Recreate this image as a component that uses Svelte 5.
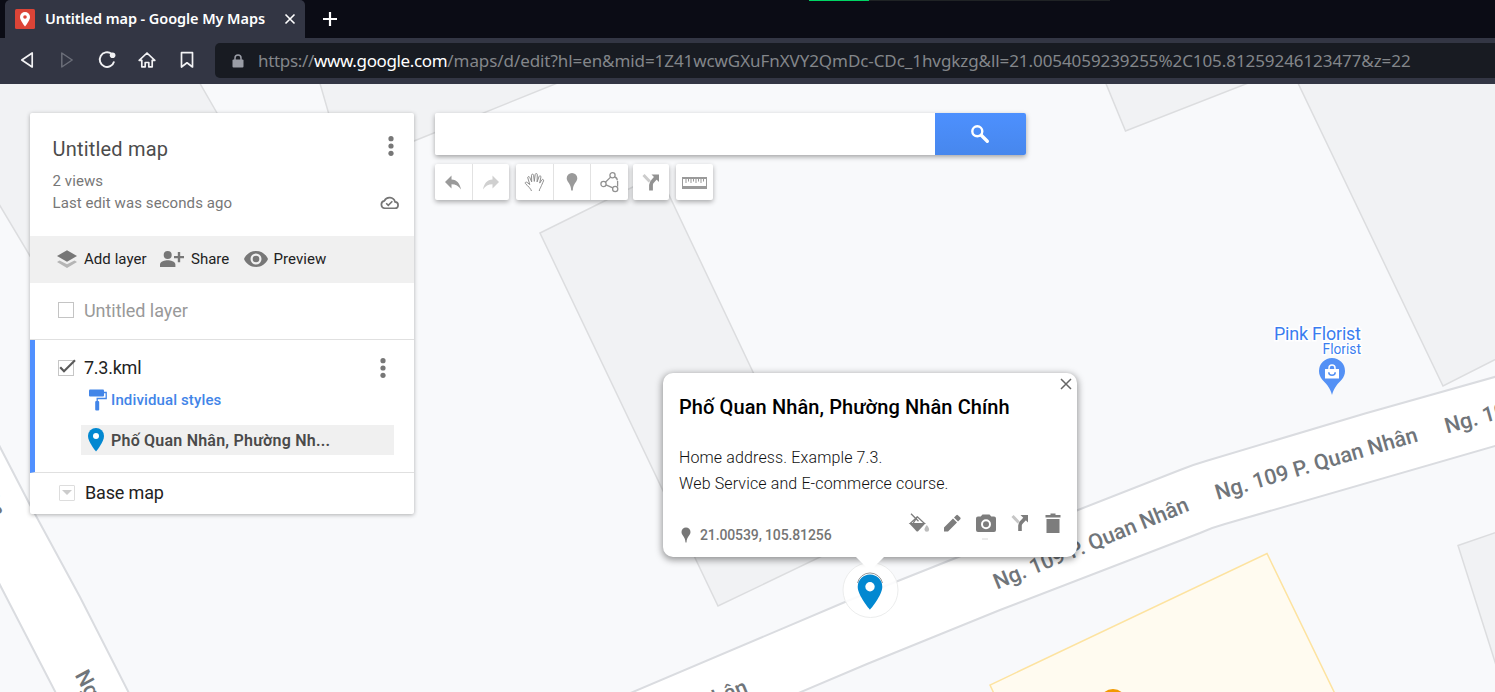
<script>
  const buildings = [
    '-4,80 198,80 217,113 290,250 60,300 30,256 -4,199',
    '319,80 565,80 414,141 345,170',
    '540,233 659,174 837,549 718,606',
    '1104.5,80 1125.5,131 1256,80',
    '1296.5,80 1443,386 1500,357 1500,80',
    '1458,545.5 1500,531 1500,678 1490,646'
  ];
  const road = 'Ng. 109 P. Quan Nhân';
</script>

<div class="browser">
  <div class="tabs">
    <div class="tab">
      <svg class="fav" viewBox="0 0 20 20"><rect width="20" height="20" rx="1.5" fill="#db4437"/><path d="M10 3a5 5 0 0 0-5 5c0 3.500 5 9.500 5 9.500s5-6 5-9.500a5 5 0 0 0-5-5z" fill="#fff"/><circle cx="10" cy="8" r="1.800" fill="#db4437"/></svg>
      <span class="tabtitle">Untitled map - Google My Maps</span>
      <svg class="tabx" viewBox="0 0 12 12"><path d="M1.500 1.500l9 9M10.500 1.500l-9 9" stroke="#fff" stroke-width="1.600"/></svg>
    </div>
    <svg class="plus" viewBox="0 0 16 16"><path d="M8 1v14M1 8h14" stroke="#fff" stroke-width="2.200"/></svg>
    <div class="load"><i></i></div>
  </div>
  <div class="nav">
    <svg viewBox="0 0 20 20"><path d="M15.200 3v14L4.800 10z" fill="none" stroke="#f2f2f4" stroke-width="1.700" stroke-linejoin="round"/></svg>
    <svg viewBox="0 0 20 20"><path d="M4.800 3v14l10.400-7z" fill="none" stroke="#6b6e79" stroke-width="1.500" stroke-linejoin="round"/></svg>
    <svg viewBox="0 0 20 20"><path d="M14.500 3.800A7.300 7.300 0 1 0 17.100 11.500" fill="none" stroke="#f2f2f4" stroke-width="1.900"/><circle cx="15.600" cy="5.300" r="2.800" fill="#f2f2f4"/></svg>
    <svg viewBox="0 0 20 20"><path d="M2.200 10.300L10 3l7.800 7.300h-2.600v6.500h-3.400v-4.300H8.200v4.300H4.800v-6.500z" fill="none" stroke="#f2f2f4" stroke-width="1.700" stroke-linejoin="round"/></svg>
    <svg viewBox="0 0 20 20"><path d="M4.500 2.700h11V17L10 12.800 4.500 17z" fill="none" stroke="#f2f2f4" stroke-width="1.700" stroke-linejoin="round"/></svg>
    <div class="address">
      <svg class="lock" viewBox="0 0 12 14"><path d="M3 6V4a3 3 0 0 1 6 0v2" fill="none" stroke="#9a9da6" stroke-width="1.500"/><rect x=".5" y="5.500" width="11" height="8" rx="1" fill="#9a9da6"/></svg>
      <span class="url"><i>https://</i><b>www.google.com</b>/maps/d/edit?hl=en&amp;mid=1Z41wcwGXuFnXVY2QmDc-CDc_1hvgkzg&amp;ll=21.0054059239255%2C105.81259246123477&amp;z=22</span>
    </div>
  </div>
</div>

<main>
  <svg class="map" viewBox="0 84 1495 608">
    <rect y="84" width="1495" height="608" fill="#f8f9fb"/>
    {#each buildings as points}
      <polygon {points} fill="#f1f2f4" stroke="#dcdddf" stroke-width="1.500"/>
    {/each}
    <path d="M997 700L990 685 1267 553.500 1338 700z" fill="#fffbf0" stroke="#fde3a0" stroke-width="1.500"/>
    <path d="M-10 428L0 447 29 503 80 597 133 701H60L0 585-10 566z" fill="#fff" stroke="#dadce0" stroke-width="2"/>
    <path d="M614 700L845 602 957 557.500 1078 510 1180 470Q1192 465 1206 461L1365 413.500 1500 375.500V444.500L1225 524Q1212 527.500 1200 533L1000 610 867 664 782 700z" fill="#fff" stroke="#dadce0" stroke-width="2"/>
    <g class="road">
      <text transform="translate(997 589.500) rotate(-22.300)" textLength="209">{road}</text>
      <text transform="translate(1217.500 500) rotate(-16.300)" textLength="210">{road}</text>
      <text transform="translate(1447 433.500) rotate(-15.500)" textLength="209">{road}</text>
      <text transform="translate(749 692.500) rotate(-22)" text-anchor="end" textLength="209">{road}</text>
      <text transform="translate(74.500 675) rotate(61.500)" textLength="209">{road}</text>
      <text transform="translate(-6.500 518.500) rotate(61.500)" text-anchor="end" textLength="209">{road}</text>
    </g>
    <g class="poi" text-anchor="end">
      <text x="1361" y="339.500" font-size="18" textLength="87">Pink Florist</text>
      <text x="1361" y="354" font-size="14" textLength="38.500">Florist</text>
    </g>
    <path d="M1332 358a13 13 0 0 0-13 13c0 7 5 10 8.500 14.500 2.500 3.500 3.500 6 4.500 9.500 1-3.500 2-6 4.500-9.500 3.500-4.500 8.500-7.500 8.500-14.500a13 13 0 0 0-13-13z" fill="#5491f5"/>
    <path d="M1325 369h14v9.500h-14z" fill="#fff"/><path d="M1329 370v-2a3 3 0 0 1 6 0v2" fill="none" stroke="#fff" stroke-width="1.500"/><path d="M1328.800 372.300a3.200 3 0 0 0 6.400 0" fill="none" stroke="#5491f5" stroke-width="1.500"/>
    <circle cx="1113" cy="702.500" r="13.500" fill="#f29900"/>
    <circle cx="870.500" cy="590" r="27.500" fill="#fff" fill-opacity=".88" stroke="#eceded" stroke-width="1"/>
    <path d="M857.500 583a12.800 12.800 0 0 1 25 0" fill="none" stroke="#999" stroke-width="1"/>
    <path d="M870 574.500a12.300 12.300 0 0 0-12.300 12.300c0 8.700 12.300 23 12.300 23s12.300-14.300 12.300-23A12.300 12.300 0 0 0 870 574.500z" fill="#0288d1"/><circle cx="870" cy="586.700" r="4.700" fill="#fff"/>
  </svg>

  <section class="panel">
    <header>
      <div class="row"><h1>Untitled map</h1>
        <svg class="dots" viewBox="0 0 6 20"><circle cx="3" cy="2.700" r="2.600"/><circle cx="3" cy="10" r="2.600"/><circle cx="3" cy="17.300" r="2.600"/></svg></div>
      <p class="views">2 views</p>
      <div class="row"><p class="edit">Last edit was seconds ago</p>
        <svg class="cloud" viewBox="0 0 20 14"><path d="M5 12.800h10.500a3.400 3.400 0 0 0 .3-6.800A6 6 0 0 0 4.600 5 3.950 3.950 0 0 0 5 12.800z" fill="none" stroke="#757575" stroke-width="1.800"/><path d="M6.500 7.500l2.200 2.200L13 5.400" fill="none" stroke="#757575" stroke-width="1.700"/></svg></div>
    </header>
    <div class="actions">
      <svg style:width="20px" viewBox="0 0 20 18"><path d="M0 12L2.500 10.500 10 14.200l7.500-3.700L20 12l-10 6z" fill="#b5b5b5"/><path d="M10 .3L20 6 10 11.700 0 6z" fill="#777"/></svg><span class="a1">Add layer</span>
      <svg style:width="24px" viewBox="0 0 24 18"><circle cx="7.700" cy="5" r="4" fill="#777"/><path d="M0 17v-2.500c0-3 5-4.300 7.700-4.300s7.700 1.300 7.700 4.300V17zM17.800 2h2.400v4H24v2.200h-3.800v4h-2.400v-4H14V6h3.800z" fill="#777"/></svg><span class="a2">Share</span>
      <svg style:width="24px" viewBox="0 0 24 18"><path d="M12 1C6.500 1 2 4.300 0 9c2 4.700 6.500 8 12 8s10-3.300 12-8c-2-4.700-6.500-8-12-8zm0 13.500A5.500 5.500 0 1 1 12 3.500a5.500 5.500 0 0 1 0 11zm0-8.800a3.300 3.300 0 1 0 0 6.600 3.300 3.300 0 0 0 0-6.600z" fill="#777"/></svg><span class="a3">Preview</span>
    </div>
    <div class="layer empty"><span class="box"></span><span>Untitled layer</span></div>
    <div class="layer active">
      <div class="lhead"><svg class="check" viewBox="0 0 19 18"><rect x=".5" y="2.500" width="15" height="15" fill="#fff" stroke="#c6c6c6"/><path d="M2.200 9.200l3.800 4L17 2.200" fill="none" stroke="#5a5a5a" stroke-width="2.200"/></svg><span class="kml">7.3.kml</span>
        <svg class="dots" viewBox="0 0 6 20"><circle cx="3" cy="2.700" r="2.600"/><circle cx="3" cy="10" r="2.600"/><circle cx="3" cy="17.300" r="2.600"/></svg></div>
      <div class="styles"><svg viewBox="0 0 18 22"><rect width="15" height="7" rx="1" y=".5" fill="#4285e8"/><path d="M15 3.500h2.200v6H8.200v3" fill="none" stroke="#4285e8" stroke-width="1.300"/><rect x="6.200" y="12" width="4" height="9.500" rx="1" fill="#4285e8"/></svg><span>Individual styles</span></div>
      <div class="place"><svg viewBox="0 0 16 24"><path d="M8 0a8 8 0 0 0-8 8c0 6 8 15.500 8 15.500S16 14 16 8a8 8 0 0 0-8-8z" fill="#0288d1"/><circle cx="8" cy="8" r="3" fill="#fff"/></svg><span>Phố Quan Nhân, Phường Nh...</span></div>
    </div>
    <div class="layer base"><span class="arrow"></span><span>Base map</span></div>
  </section>

  <section class="tools">
    <div class="search"><div class="input"></div><div class="go"><svg viewBox="0 0 20 20"><circle cx="7.300" cy="7.300" r="5" fill="none" stroke="#fff" stroke-width="2.400"/><path d="M11.300 11.300l6 6" stroke="#fff" stroke-width="3.400" stroke-linecap="round"/></svg></div></div>
    <div class="bar">
      <div class="group g1">
        <span><svg viewBox="0 0 20 20"><path d="M8.500 3.500v4C14 7.800 16.800 11.500 18 17.500c-2.300-3.500-5.300-5.200-9.500-5.200v4.200L2 10z" fill="#9a9a9a"/></svg></span>
        <span><svg viewBox="0 0 20 20"><path d="M11.500 3.500v4C6 7.800 3.200 11.500 2 17.500c2.300-3.500 5.300-5.200 9.500-5.200v4.200L18 10z" fill="#d0d0d0"/></svg></span>
      </div>
      <div class="group g2">
        <span><svg viewBox="0 0 20 20"><path d="M7.500 19c-.3-2-4-5.300-6-7.300-.9-1 .4-2.200 1.600-1.300l2.700 2.200-2-6.700c-.4-1.400 1.400-1.900 1.900-.6l2 4.600-.2-6.600c0-1.500 1.900-1.500 2.100-.1l.7 6.200.9-6.900c.2-1.400 2.200-1.200 2.100.2l-.2 7.200 1.900-5.300c.4-1.300 2.200-.9 1.900.5l-1.200 6 2.100-3.200c.7-1.100 2.300-.3 1.700 1-1.200 2.800-1.700 3.900-2.600 5.900-.5 1.500-1.600 2.400-1.600 4.200" fill="none" stroke="#8e8e8e" stroke-width="1" stroke-linejoin="round"/></svg></span>
        <span><svg viewBox="0 0 20 20"><path d="M10 1a5.300 5.300 0 0 0-5.300 5.300C4.700 10 9 11.500 9.200 18.500h1.600C11 11.500 15.300 10 15.300 6.300A5.300 5.300 0 0 0 10 1z" fill="#9a9a9a"/></svg></span>
        <span><svg viewBox="0 0 20 20" fill="none" stroke="#929292" stroke-width="1.300"><circle cx="12.500" cy="3.300" r="2.600"/><circle cx="3.500" cy="12" r="2.600"/><circle cx="15.200" cy="17" r="2.600"/><path d="M10.600 5.100L5.400 10.200M6 12.800l6.800 3M14.400 5c2 .5 3 1.500 2.800 3.400M17.600 9v5.600"/></svg></span>
      </div>
      <div class="group g3"><span><svg viewBox="0 0 20 20"><path d="M2.500 3l6.200 6.500" stroke="#ccc" stroke-width="3"/><path d="M10 18.500V13q0-2 1.500-3.500L15 5.500" fill="none" stroke="#929292" stroke-width="3.800"/><path d="M10.500 2.500H18V10z" fill="#929292"/></svg></span></div>
      <div class="group g4"><span><svg class="ruler" viewBox="0 0 25 12"><path d="M0 0h25v12H0z" fill="#9a9a9a"/><path d="M1 2h23v7H1z" fill="#fff"/><path d="M4 2v4M6.500 2v2.500M9 2v4M11.500 2v2.500M14 2v4M16.500 2v2.500M19 2v4M21.500 2v2.500" stroke="#999"/></svg></span></div>
    </div>
  </section>

  <article class="popup">
    <svg class="close" viewBox="0 0 12 12"><path d="M1 1l10 10M11 1L1 11" stroke="#666" stroke-width="1.500"/></svg>
    <h2>Phố Quan Nhân, Phường Nhân Chính</h2>
    <div class="desc"><p class="d1">Home address. Example 7.3.</p><p class="d2">Web Service and E-commerce course.</p></div>
    <footer>
      <div class="coords"><svg viewBox="0 0 10 16"><path d="M5 .5A4.500 4.500 0 0 0 .5 5C.5 8.500 4.300 9.500 4.500 15.500h1C5.700 9.500 9.500 8.500 9.500 5A4.500 4.500 0 0 0 5 .5z" fill="#777"/></svg><span>21.00539, 105.81256</span></div>
      <div class="icons">
        <svg viewBox="0 0 20 20"><path d="M8.300 3.800L15.500 10.500H1.200z" fill="#fff" stroke="#7d7d7d" stroke-width="1.200"/><path d="M2 .8l7.500 7.500M8.300 3.800l-4 6" stroke="#7d7d7d" stroke-width="1.300"/><path d="M.3 10.500h16l-7.200 7.700q-.8.800-1.600 0z" fill="#7d7d7d"/><path d="M17.800 12s-2.300 2.700-2.300 4.500a2.300 2.300 0 0 0 4.600 0c0-1.800-2.300-4.500-2.300-4.500z" fill="#bcbcbc"/></svg>
        <svg viewBox="0 0 20 20"><path d="M1 14.500V18.500h4l9-9-4-4zM15 8.500l2.300-2.300q.8-.8 0-1.600L14.900 2.200q-.8-.8-1.600 0L11 4.500z" fill="#7d7d7d"/></svg>
        <svg viewBox="0 0 20 20"><path d="M6.500 1.500h7l1.800 2H18q2 0 2 2V17q0 2-2 2H2q-2 0-2-2V5.500q0-2 2-2h2.700z" fill="#7d7d7d"/><circle cx="10" cy="11.300" r="4" fill="#7d7d7d" stroke="#fff" stroke-width="2"/><path d="M6 26h6" stroke="#d8d8d8"/></svg>
        <svg viewBox="0 0 20 20"><path d="M2.500 3l6.200 6.500" stroke="#c6c6c6" stroke-width="3"/><path d="M10 18V12.500q0-1.500 1.500-3.200L15 5.500" fill="none" stroke="#7d7d7d" stroke-width="3.600"/><path d="M10.500 2H18V9.500z" fill="#7d7d7d"/></svg>
        <svg viewBox="0 0 20 20"><path d="M7.500 .5h5v1.500h5v2.500h-15V2h5zM3.500 6h13v14h-13z" fill="#7d7d7d"/></svg>
      </div>
    </footer>
    <span class="tip"></span>
  </article>
</main>

<style>
  :global(body) { margin: 0; overflow: hidden; }
  :global(#app) { width: 1495px; height: 692px; overflow: hidden; }
  svg { display: block; flex: none; overflow: visible; }
  p, h1, h2 { margin: 0; font-weight: 400; white-space: nowrap; }
  span { white-space: nowrap; }
  .browser { height: 84px; background: #333644; font-family: "Noto Sans", "Open Sans", sans-serif; }
  .tabs { position: relative; height: 38px; display: flex; align-items: center; background: #0b0c15; }
  .tab { box-sizing: border-box; width: 300px; height: 38px; margin-left: 5px; padding-left: 10px; display: flex; align-items: center; background: #333644; border-radius: 5px 5px 0 0; }
  .fav { width: 20px; height: 20px; margin-right: 10px; }
  .tabtitle { width: 239px; color: #fff; font-size: 14.500px; font-weight: 600; line-height: 20px; letter-spacing: -.08px; padding-bottom: 2px; }
  .tabx { width: 12px; height: 12px; }
  .plus { width: 16px; height: 16px; margin-left: 17px; }
  .load { position: absolute; left: 809px; top: 0; width: 301px; height: 1px; background: #202325; }
  .load i { display: block; width: 60px; height: 1px; background: #00d563; }
  .nav { box-sizing: border-box; height: 46px; padding: 0 0 1px 17.500px; display: flex; align-items: center; gap: 20px; }
  .nav > svg { width: 20px; height: 20px; margin: -1px .5px 0 -.5px; }
  .address { flex: 1; height: 35px; margin-left: -2.500px; padding-left: 17px; display: flex; align-items: center; background: #181b22; border-radius: 5px 0 0 5px; }
  .lock { width: 12px; height: 14px; margin-right: 14px; }
  .url { font-size: 17px; line-height: 24px; letter-spacing: -.075px; color: #83868a; }
  .url i { font-style: normal; letter-spacing: -.32px; }
  .url b { font-weight: 400; color: #fff; letter-spacing: -.36px; }

  main { position: relative; height: 608px; font-family: Roboto, sans-serif; }
  .map { width: 1495px; height: 608px; overflow: hidden; }
  .road text { font-size: 21.500px; font-weight: 500; fill: #70757a; stroke: #fff; stroke-width: 3px; paint-order: stroke; }
  .poi text { fill: #3a7df0; stroke: #fff; stroke-width: 3px; paint-order: stroke; }

  .panel { position: absolute; left: 30px; top: 29px; width: 384px; height: 401px; background: #fff; border-radius: 2px; box-shadow: 0 1px 4px rgba(0,0,0,.3); overflow: hidden; }
  header { box-sizing: border-box; height: 123px; padding: 23px 14px 0 22.500px; color: #777; font-size: 15px; }
  .row { display: flex; align-items: center; justify-content: space-between; }
  h1 { font-size: 20px; line-height: 26px; color: #4c4c4c; letter-spacing: .2px; }
  header .dots { margin: -6px 6px 0 0; }
  .dots { width: 6px; height: 20px; fill: #777; }
  .views, .edit { line-height: 22px; letter-spacing: .08px; }
  .views { padding-top: 8px; }
  .cloud { width: 19px; height: 13.500px; margin: -1px 1px 0 0; }
  .actions { box-sizing: border-box; height: 47px; padding: 0 0 1px 27px; display: flex; align-items: center; background: #f0f0f0; font-size: 15px; color: #222; }
  .actions svg { height: 18px; }
  .a1 { width: 69px; margin-left: 7px; margin-right: 7px; letter-spacing: .06px; }
  .a2 { width: 45.500px; margin-left: 7px; margin-right: 7px; }
  .a3 { margin-left: 6px; letter-spacing: .05px; }
  .layer { box-sizing: border-box; border-bottom: 1px solid #e0e0e0; font-size: 18px; color: #222; }
  .empty { height: 57px; padding: 0 0 2px 28px; display: flex; align-items: center; gap: 10px; color: #999; letter-spacing: -.05px; }
  .box { width: 14px; height: 14px; border: 1px solid #c4c4c4; }
  .active { height: 133px; border-left: 5px solid #5090ff; padding: 15px 20px 0 23px; }
  .lhead { height: 26px; display: flex; align-items: center; }
  .lhead .dots { margin-left: auto; margin-right: 8px; }
  .kml { padding-bottom: 2px; letter-spacing: -.25px; }
  .check { width: 19px; height: 18px; margin: -3px 7px 0 0; }
  .styles { height: 22px; margin: 8px 0 14px 31px; display: flex; align-items: center; gap: 4px; color: #4285e8; font-size: 15px; font-weight: 500; letter-spacing: .13px; }
  .styles svg { width: 18px; height: 22px; }
  .place { height: 30px; margin-left: 23px; padding-left: 7px; display: flex; align-items: center; gap: 7px; background: #f0f0f0; color: #4a4a4a; font-size: 16px; font-weight: 600; letter-spacing: .22px; }
  .place svg { width: 16px; height: 24px; }
  .base { height: 41px; padding: 0 0 2px 29px; border: 0; display: flex; align-items: center; gap: 10px; letter-spacing: -.15px; }
  .arrow { width: 14px; height: 14px; border: 1px solid #ddd; border-radius: 1px; display: flex; align-items: center; justify-content: center; }
  .arrow::after { content: ""; border: 5px solid transparent; border-top-color: #ccc; border-bottom: 0; }

  .tools { position: absolute; left: 435px; top: 29px; }
  .search { width: 591px; height: 42px; display: flex; border-radius: 2px; box-shadow: 0 2px 5px rgba(0,0,0,.35); }
  .input { flex: 1; background: #fff; border-radius: 2px 0 0 2px; }
  .go { box-sizing: border-box; width: 91px; padding-right: 2px; display: flex; align-items: center; justify-content: center; background: linear-gradient(#4d90fe, #4787ed); border-radius: 0 2px 2px 0; }
  .go svg { width: 20px; height: 20px; }
  .bar { display: flex; margin-top: 9px; }
  .group { height: 36px; display: flex; background: #fff; border-radius: 2px; box-shadow: 0 2px 5px rgba(0,0,0,.32); }
  .group span { flex: 1; display: flex; align-items: center; justify-content: center; }
  .group span + span { border-left: 1px solid #e2e2e2; }
  .group svg { width: 20px; height: 20px; }
  .group .ruler { width: 25px; height: 12px; margin-top: 2px; }
  .g1 { width: 74px; margin-right: 7px; }
  .g2 { width: 112px; margin-right: 5px; }
  .g3 { width: 36px; margin-right: 7px; }
  .g4 { width: 37px; }

  .popup { position: absolute; left: 663px; top: 289px; box-sizing: border-box; width: 414px; height: 184px; padding: 20px 16px 0; background: #fff; border-radius: 10px; box-shadow: 0 2px 7px 1px rgba(0,0,0,.4); }
  .close { position: absolute; right: 5px; top: 5px; width: 12px; height: 12px; }
  h2 { font-size: 20px; line-height: 28px; font-weight: 500; color: #000; letter-spacing: .1px; }
  .desc { padding-top: 24px; font-family: "Roboto Light", Roboto, sans-serif; font-size: 16px; line-height: 26px; font-weight: 300; color: #111; letter-spacing: .13px; }
  footer { display: flex; justify-content: space-between; padding-top: 12px; }
  .coords { padding-top: 16px; height: 20px; display: flex; align-items: center; gap: 9px; padding-left: 2px; font-size: 14px; font-weight: 500; color: #757575; letter-spacing: -.12px; }
  .coords svg { width: 10px; height: 16px; }
  .icons { display: flex; gap: 13.500px; padding-top: 4px; margin-right: -2px; }
  .icons svg { width: 20px; height: 20px; }
  .tip { position: absolute; left: 193px; top: 184px; border: 14px solid transparent; border-top-color: #fff; border-bottom: 0; }
</style>
